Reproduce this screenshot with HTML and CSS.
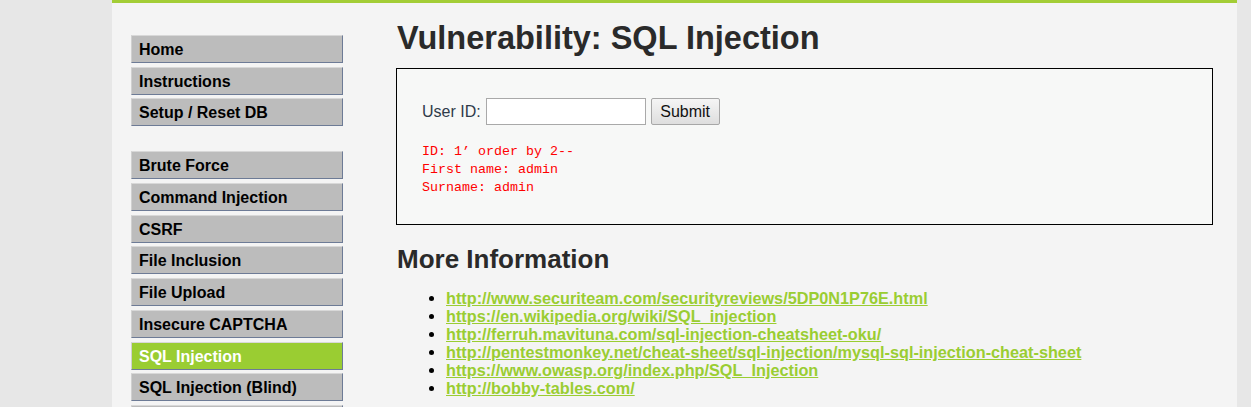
FILE: index.html
```html
<!DOCTYPE html>
<html>
<head>
<meta charset="utf-8">
<link rel="stylesheet" href="styles.css">
</head>
<body>
<div class="page">
  <nav class="menu">
    <ul class="group">
      <li><a href="#">Home</a></li>
      <li><a href="#">Instructions</a></li>
      <li><a href="#">Setup / Reset DB</a></li>
    </ul>
    <ul class="group">
      <li><a href="#">Brute Force</a></li>
      <li><a href="#">Command Injection</a></li>
      <li><a href="#">CSRF</a></li>
      <li><a href="#">File Inclusion</a></li>
      <li><a href="#">File Upload</a></li>
      <li><a href="#">Insecure CAPTCHA</a></li>
      <li class="active"><a href="#">SQL Injection</a></li>
      <li><a href="#">SQL Injection (Blind)</a></li>
      <li><a href="#"></a></li>
    </ul>
  </nav>
  <main class="body">
    <h1 class="title">Vulnerability: SQL Injection</h1>
    <div class="vuln">
      <form class="form">
        <span class="label">User ID:</span>
        <input class="field" type="text">
        <button class="submit" type="button">Submit</button>
      </form>
      <pre class="result">ID: 1’ order by 2--
First name: admin
Surname: admin</pre>
    </div>
    <h2 class="more">More Information</h2>
    <ul class="links">
      <li><a href="#">http://www.securiteam.com/securityreviews/5DP0N1P76E.html</a></li>
      <li><a href="#">https://en.wikipedia.org/wiki/SQL_injection</a></li>
      <li><a href="#">http://ferruh.mavituna.com/sql-injection-cheatsheet-oku/</a></li>
      <li><a href="#">http://pentestmonkey.net/cheat-sheet/sql-injection/mysql-sql-injection-cheat-sheet</a></li>
      <li><a href="#">https://www.owasp.org/index.php/SQL_Injection</a></li>
      <li><a href="#">http://bobby-tables.com/</a></li>
    </ul>
  </main>
</div>
</body>
</html>
```

FILE: styles.css
```css
html, body {
  margin: 0;
  padding: 0;
  height: 407px;
  overflow: hidden;
  background: #e7e7e7;
  font-family: "Liberation Sans", Arial, sans-serif;
}

.page {
  margin-left: 112px;
  width: 1125px;
  height: 404px;
  border-top: 3px solid #a3cd36;
  background: #f4f4f4;
  display: flex;
  align-items: flex-start;
}

.menu {
  width: 212px;
  margin-left: 19px;
  padding-top: 32px;
  flex: none;
}

.group {
  list-style: none;
  margin: 0 0 25px 0;
  padding: 0;
}

.group li {
  margin-bottom: 3.7px;
}

.group a {
  display: block;
  height: 26px;
  line-height: 27px;
  padding-left: 7px;
  background: #bcbcbc;
  border: 1px solid;
  border-color: #d8d8d8 #6d7b96 #6d7b96 #d0d0d0;
  color: #000;
  font-weight: bold;
  font-size: 16px;
  text-decoration: none;
}

.group li.active a {
  background: #9acd32;
  color: #fff;
}

.body {
  margin-left: 53px;
  width: 817px;
  flex: none;
}

.title {
  margin: 15px 0 0 1px;
  font-size: 32.5px;
  line-height: 40px;
  color: #2a2a2a;
  font-weight: bold;
}

.vuln {
  margin-top: 10px;
  height: 155px;
  border: 1px solid #000;
  background: #f7f8f7;
  padding: 0 25px;
}

.form {
  margin: 29px 0 0 0;
  display: flex;
  align-items: center;
  height: 27px;
}

.label {
  font-size: 16px;
  color: #2f3b4a;
  margin-right: 5px;
}

.field {
  width: 160px;
  height: 27px;
  box-sizing: border-box;
  border: 1px solid #a9a9a9;
  background: #fff;
  margin: 0 5px 0 0;
  padding: 0;
}

.submit {
  width: 69px;
  height: 27px;
  box-sizing: border-box;
  border: 1px solid #a7a7a7;
  border-radius: 2px;
  background: linear-gradient(#f5f5f5, #dedede);
  font-family: "Liberation Sans", Arial, sans-serif;
  font-size: 16px;
  color: #111;
  padding: 0;
}

.result {
  margin: 18px 0 0 0;
  font-family: "Liberation Mono", "Courier New", monospace;
  font-size: 13.33px;
  line-height: 18px;
  color: #f00;
}

.more {
  margin: 18px 0 0 1px;
  font-size: 26px;
  line-height: 32px;
  color: #2a2a2a;
  font-weight: bold;
}

.links {
  margin: 14px 0 0 0;
  padding-left: 50px;
  font-size: 16.25px;
  line-height: 18px;
}

.links a {
  color: #9acd32;
  font-weight: bold;
}
```
